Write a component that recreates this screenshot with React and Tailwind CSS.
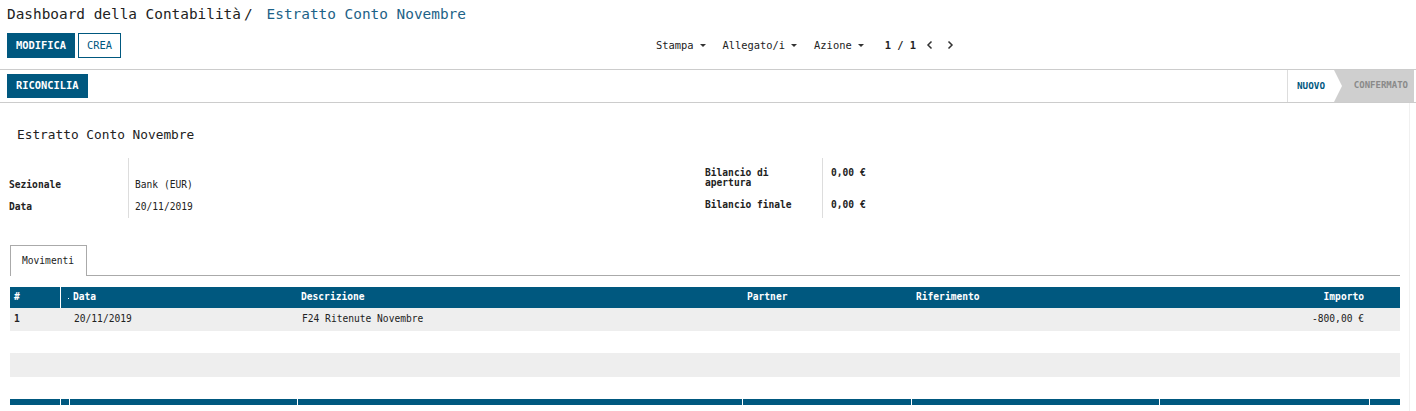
import React from 'react';

const MONO = { fontFamily: '"DejaVu Sans Mono", "Liberation Mono", monospace' };

const COLS = [
  { w: 'w-[50px]', key: 'num', label: '#', align: 'pl-[4px]' },
  { w: 'w-[9px]', key: 'handle', label: '', align: '' },
  { w: 'w-[228px]', key: 'date', label: 'Data', align: 'pl-[4px]' },
  { w: 'w-[445px]', key: 'desc', label: 'Descrizione', align: 'pl-[4px]' },
  { w: 'w-[169px]', key: 'partner', label: 'Partner', align: 'pl-[5px]' },
  { w: 'w-[248px]', key: 'ref', label: 'Riferimento', align: 'pl-[5px]' },
  { w: 'w-[210px]', key: 'amount', label: 'Importo', align: 'pr-[5px] justify-end' },
  { w: 'w-[31px]', key: 'trash', label: '', align: '' },
];

const ROWS = [
  { num: '1', date: '20/11/2019', desc: 'F24 Ritenute Novembre', amount: '-800,00 €', h: 'h-[23px]', bg: 'bg-[#eeeeee]' },
  { h: 'h-[22px]', bg: 'bg-white' },
  { h: 'h-[24px]', bg: 'bg-[#eeeeee]' },
  { h: 'h-[22px]', bg: 'bg-white' },
];

const Caret = () => (
  <span className="inline-block ml-[6px] w-0 h-0 border-l-[3px] border-r-[3px] border-t-[3px] border-l-transparent border-r-transparent border-t-[#333] align-middle" />
);

const Chevron = ({ dir }) => (
  <svg width="8" height="10" viewBox="0 0 8 10" fill="none" stroke="#333" strokeWidth="1.5">
    {dir === 'left' ? <path d="M5.5 1.5 L2 5 L5.5 8.5" /> : <path d="M2.5 1.5 L6 5 L2.5 8.5" />}
  </svg>
);

export default function App() {
  return (
    <div className="w-[1416px] h-[411px] overflow-hidden bg-white text-[#222]" style={MONO}>
      {/* control panel */}
      <div className="h-[70px] border-b border-[#cccccc] px-[7px] pt-[5px]">
        <div className="h-[18px] flex items-center text-[14.4px] leading-none whitespace-nowrap">
          <span>Dashboard della Contabilità</span>
          <span className="ml-[3px]">/</span>
          <span className="ml-[14px] text-[#1d6287]">Estratto Conto Novembre</span>
        </div>
        <div className="mt-[10px] h-[25px] flex items-center">
          <div className="w-[649px] flex items-center gap-[3px]">
            <button className="h-[25px] px-[9px] bg-[#00587f] text-white text-[10.4px] font-bold">MODIFICA</button>
            <button className="h-[25px] px-[8px] border border-[#00587f] text-[#00587f] text-[10.4px]">CREA</button>
          </div>
          <div className="flex items-center text-[10.4px] whitespace-nowrap">
            <span className="flex items-center">Stampa<Caret /></span>
            <span className="flex items-center ml-[17px]">Allegato/i<Caret /></span>
            <span className="flex items-center ml-[17px]">Azione<Caret /></span>
            <span className="ml-[21px] font-semibold">1 / 1</span>
            <span className="ml-[10px] flex items-center gap-[12px]">
              <Chevron dir="left" />
              <Chevron dir="right" />
            </span>
          </div>
        </div>
      </div>

      {/* status bar */}
      <div className="h-[33px] border-b border-[#cccccc] pl-[7px] flex items-center justify-between">
        <button className="h-[24px] px-[9px] bg-[#00587f] text-white text-[10.4px] font-bold">RICONCILIA</button>
        <div className="h-[32px] self-start flex items-stretch pr-[2px]">
          <div className="w-[47px] border-l border-[#dddddd] flex items-center justify-center text-[9.3px] font-bold text-[#00587f]">
            NUOVO
          </div>
          <div className="relative w-[80px] bg-[#cfcfcf] flex items-center justify-end pr-[6px] text-[9px] font-bold text-[#8a8a8a]">
            <span className="absolute left-0 top-0 w-0 h-0 border-t-[16px] border-b-[16px] border-l-[8px] border-t-transparent border-b-transparent border-l-white" />
            CONFERMATO
          </div>
        </div>
      </div>

      {/* sheet */}
      <div className="w-[1410px] h-[308px] pt-[25px] border-r border-[#f0f0f0]">
        <div className="pl-[17px] h-[14px] flex items-center text-[12.8px] leading-none">Estratto Conto Novembre</div>

        <div className="mt-[16px] flex pl-[9px] text-[9.6px]">
          <div className="w-[696px] flex">
            <div className="w-[120px] border-r border-[#dddddd] font-bold">
              <div className="h-[15px]" />
              <div className="h-[24px] flex items-center">Sezionale</div>
              <div className="h-[21px] flex items-center">Data</div>
            </div>
            <div className="pl-[6px]">
              <div className="h-[15px]" />
              <div className="h-[24px] flex items-center">Bank (EUR)</div>
              <div className="h-[21px] flex items-center">20/11/2019</div>
            </div>
          </div>
          <div className="flex">
            <div className="w-[118px] border-r border-[#dddddd] font-bold">
              <div className="h-[38px] pt-[10px] leading-[10px]">Bilancio di<br />apertura</div>
              <div className="h-[18px] flex items-center">Bilancio finale</div>
            </div>
            <div className="pl-[8px] font-bold">
              <div className="h-[38px] pt-[10px] leading-[10px]">0,00 €</div>
              <div className="h-[18px] flex items-center">0,00 €</div>
            </div>
          </div>
        </div>

        {/* tabs */}
        <div className="mt-[27px] mx-[10px] w-[1390px] h-[31px] border-b border-[#aaaaaa] flex">
          <div className="w-[77px] h-[31px] border border-b-0 border-[#aaaaaa] bg-white flex items-center pl-[11px] text-[9.6px]">
            Movimenti
          </div>
        </div>

        {/* table */}
        <div className="mt-[11px] ml-[10px] w-[1390px] text-[9.6px]">
          <div className="h-[21px] bg-[#00587f] text-white font-bold flex">
            {COLS.map((c, i) => (
              <div
                key={c.key}
                className={`${c.w} ${c.align} flex items-center ${i === 1 ? 'border-l border-white relative' : ''}`}
              >
                {c.label}
                {i === 1 && <span className="absolute left-[7px] top-[11px] w-[1px] h-[1px] bg-white" />}
              </div>
            ))}
          </div>
          {ROWS.map((r, ri) => (
            <div key={ri} className={`${r.h} ${r.bg} flex`}>
              {COLS.map((c, i) => (
                <div key={c.key} className={`${c.w} ${c.align} flex items-center ${i > 0 ? 'border-l border-transparent' : 'font-bold'}`}>
                  {r[c.key] || ''}
                </div>
              ))}
            </div>
          ))}
          <div className="h-[6px] bg-[#00587f] flex">
            {COLS.map((c, i) => (
              <div key={c.key} className={`${c.w} h-[6px] ${i > 0 ? 'border-l border-white' : ''}`} />
            ))}
          </div>
        </div>
      </div>
    </div>
  );
}
